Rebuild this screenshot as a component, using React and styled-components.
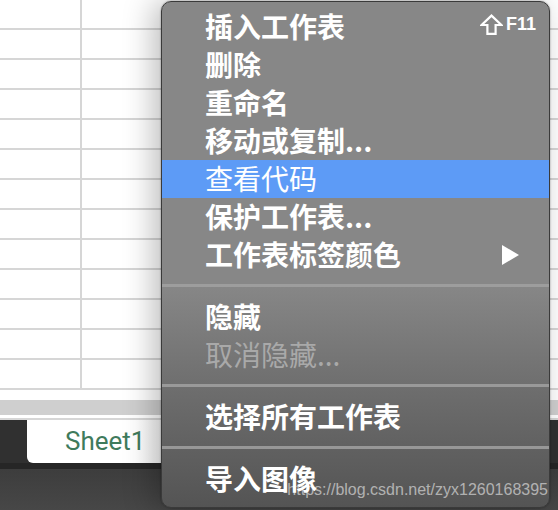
import React from 'react';
import styled, { createGlobalStyle } from 'styled-components';

const GlobalStyle = createGlobalStyle`
  html, body {
    margin: 0;
    padding: 0;
    width: 558px;
    height: 510px;
    overflow: hidden;
    background: #ffffff;
    font-family: 'Noto Sans CJK SC', 'Noto Sans', sans-serif;
  }
`;

const menuItems = [
  { label: '插入工作表', shortcut: true },
  { label: '删除' },
  { label: '重命名' },
  { label: '移动或复制...' },
  { label: '查看代码', active: true },
  { label: '保护工作表...' },
  { label: '工作表标签颜色', submenu: true },
  { divider: true },
  { label: '隐藏' },
  { label: '取消隐藏...', disabled: true },
  { divider: true },
  { label: '选择所有工作表' },
  { divider: true },
  { label: '导入图像' },
];

function ShiftIcon() {
  return (
    <IconSvg width="23" height="21" viewBox="0 0 23 21">
      <path
        d="M11.5 1.6 L21.4 11 L15.6 11 L15.6 19.8 L7.4 19.8 L7.4 11 L1.6 11 Z"
        fill="none"
        stroke="#fff"
        strokeWidth="2.2"
        strokeLinejoin="miter"
      />
    </IconSvg>
  );
}

function SubmenuArrow() {
  return (
    <IconSvg width="17" height="20" viewBox="0 0 17 20">
      <polygon points="0,0 17,10 0,20" fill="#fff" />
    </IconSvg>
  );
}

function App() {
  const rows = Array.from({ length: 13 });

  return (
    <Page>
      <GlobalStyle />
      <Sheet>
        {rows.map((_, i) => (
          <GridRow key={i}>
            <Cell />
            <Cell wide />
          </GridRow>
        ))}
        <ScrollArea>
          <ScrollTrack />
        </ScrollArea>
      </Sheet>

      <TabBar>
        <TabGap />
        <SheetTab>Sheet1</SheetTab>
      </TabBar>
      <StatusBar />

      <Menu>
        {menuItems.map((item, i) =>
          item.divider ? (
            <Divider key={i} />
          ) : (
            <MenuItem key={i} active={item.active} disabled={item.disabled}>
              <Label>{item.label}</Label>
              {item.shortcut && (
                <Shortcut>
                  <ShiftIcon />
                  F11
                </Shortcut>
              )}
              {item.submenu && (
                <ArrowWrap>
                  <SubmenuArrow />
                </ArrowWrap>
              )}
            </MenuItem>
          )
        )}
      </Menu>

      <Watermark>https://blog.csdn.net/zyx1260168395</Watermark>
    </Page>
  );
}

const Page = styled.div`
  position: relative;
  width: 558px;
  height: 510px;
  overflow: hidden;
  display: flex;
  flex-direction: column;
  background: #ffffff;
`;

const Sheet = styled.div`
  height: 420px;
  display: flex;
  flex-direction: column;
  background: #ffffff;
`;

const GridRow = styled.div`
  height: 28px;
  display: flex;
  border-bottom: 2px solid #d6d6d6;
`;

const Cell = styled.div`
  width: ${({ wide }) => (wide ? 'auto' : '80px')};
  flex: ${({ wide }) => (wide ? '1' : 'none')};
  border-right: ${({ wide }) => (wide ? 'none' : '2px solid #d6d6d6')};
`;

const ScrollArea = styled.div`
  height: 18px;
  padding-top: 10px;
  border-bottom: 2px solid #d6d6d6;
`;

const ScrollTrack = styled.div`
  height: 15px;
  background: #cfcfcf;
`;

const TabBar = styled.div`
  height: 43px;
  display: flex;
  background: #303030;
`;

const TabGap = styled.div`
  width: 27px;
`;

const SheetTab = styled.div`
  width: 160px;
  padding-left: 38px;
  display: flex;
  align-items: center;
  background: linear-gradient(90deg, #ffffff 55%, #e2e2e2 100%);
  border-bottom-left-radius: 6px;
  font-family: Roboto, 'Liberation Sans', sans-serif;
  font-size: 26px;
  color: #3f7b5c;
  padding-bottom: 2px;
`;

const StatusBar = styled.div`
  flex: 1;
  border-top: 6px solid #262626;
  background: linear-gradient(#3d3d3d, #474747);
`;

const Menu = styled.div`
  position: absolute;
  top: 1px;
  left: 161px;
  width: 387px;
  padding: 6px 0 9px;
  border: 1px solid #3a3a3a;
  border-radius: 10px;
  background: linear-gradient(#878787 0%, #878787 56%, #6c6c6c 78%, #545454 100%);
  box-shadow: -8px 0 30px rgba(0, 0, 0, 0.26), 0 0 2px rgba(0, 0, 0, 0.4);
  display: flex;
  flex-direction: column;
`;

const MenuItem = styled.div`
  height: 38px;
  padding: 0 13px 0 43px;
  display: flex;
  align-items: center;
  justify-content: space-between;
  font-size: 28px;
  line-height: 38px;
  font-weight: ${({ active, disabled }) => (active || disabled ? 400 : 700)};
  color: ${({ disabled }) => (disabled ? '#a9a9a9' : '#ffffff')};
  background: ${({ active }) => (active ? '#5d9bf6' : 'transparent')};
  white-space: nowrap;
`;

const Label = styled.span`
  margin-top: -3px;
`;

const IconSvg = styled.svg`
  flex: none;
  display: block;
`;

const Shortcut = styled.span`
  flex: none;
  display: flex;
  align-items: center;
  gap: 3px;
  font-family: 'Liberation Sans', Arial, sans-serif;
  font-size: 18px;
  line-height: 21px;
  font-weight: 700;
  color: #ffffff;
  margin-top: -5px;
`;

const ArrowWrap = styled.span`
  display: flex;
  align-items: center;
  margin-right: 17px;
`;

const Divider = styled.div`
  height: 3px;
  margin: 10px 0 11px;
  background: #a1a1a1;
  opacity: 0.85;
`;

const Watermark = styled.div`
  position: absolute;
  right: 10px;
  bottom: 11px;
  font-family: 'Liberation Sans', Arial, sans-serif;
  font-size: 16px;
  color: rgba(255, 255, 255, 0.55);
  pointer-events: none;
`;

export default App;
